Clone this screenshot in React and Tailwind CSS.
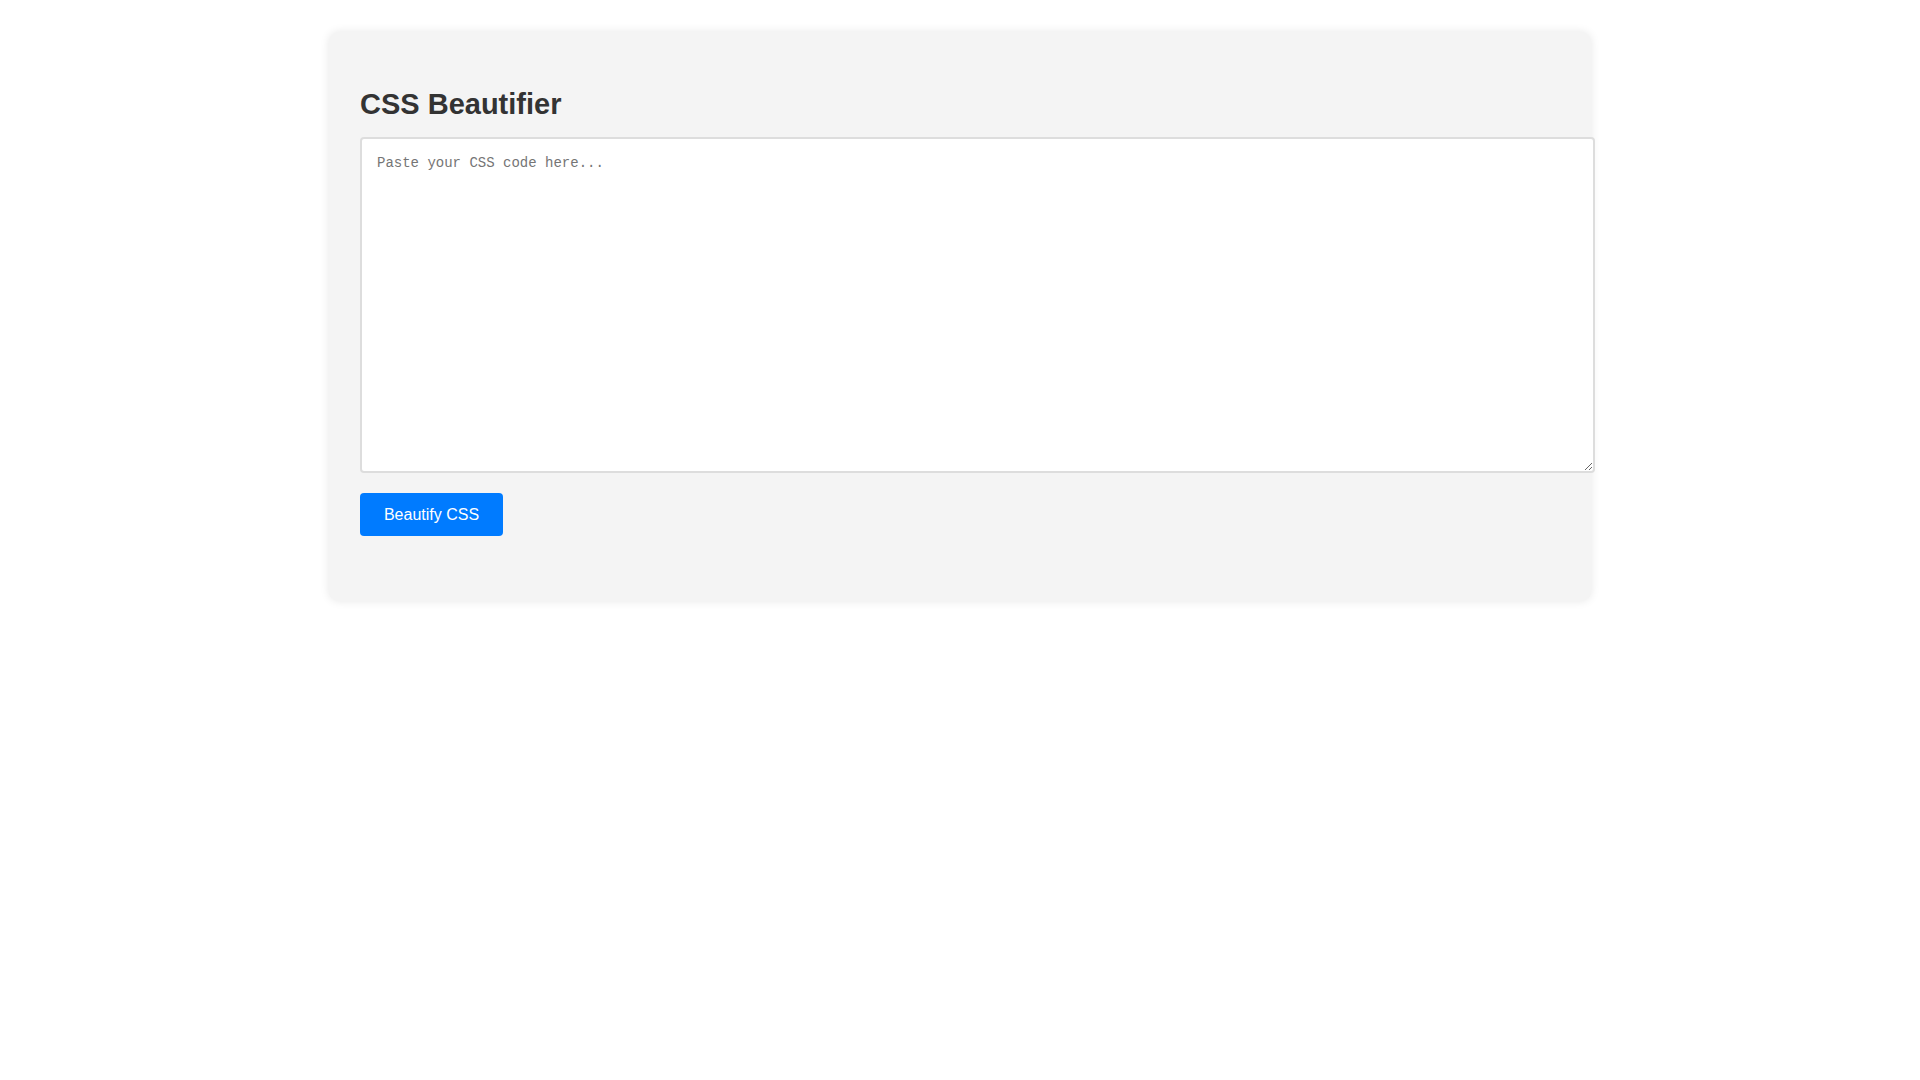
export default function App() {
  return (
    <div className="min-h-screen bg-white pt-[32px]" style={{ fontFamily: '"Liberation Sans", Arial, sans-serif' }}>
      <main className="mx-auto w-[1262px] rounded-[10px] bg-[#f4f4f4] px-[31px] pt-[30px] pb-[65px] shadow-[0_0_10px_rgba(0,0,0,0.1)]">
        <h1 className="mt-[26px] mb-4 text-[29px] leading-[33px] font-bold text-[#333]">CSS Beautifier</h1>
        <textarea
          className="block h-[336px] w-[1235px] rounded-[4px] border-2 border-[#ddd] bg-white px-[15px] pt-[16px] pb-[15px] text-[14px] leading-[16px] text-[#333] outline-none placeholder:text-[#757575]"
          style={{ fontFamily: '"Liberation Mono", "Courier New", monospace' }}
          placeholder="Paste your CSS code here..."
        />
        <button className="mt-5 flex h-[43px] w-[143px] items-center justify-center rounded-[4px] bg-[#007bff] text-[16px] text-white">
          Beautify CSS
        </button>
      </main>
    </div>
  )
}
